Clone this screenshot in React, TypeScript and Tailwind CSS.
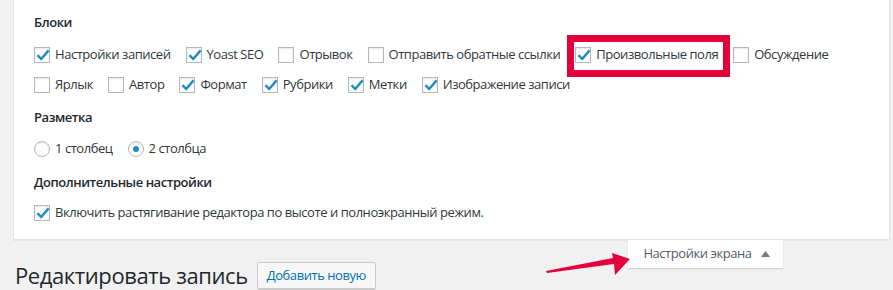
import type { ReactNode } from 'react';

const rowOne = [
  { label: 'Настройки записей', checked: true },
  { label: 'Yoast SEO', checked: true },
  { label: 'Отрывок', checked: false },
  { label: 'Отправить обратные ссылки', checked: false },
  { label: 'Произвольные поля', checked: true },
  { label: 'Обсуждение', checked: false },
];

const rowTwo = [
  { label: 'Ярлык', checked: false },
  { label: 'Автор', checked: false },
  { label: 'Формат', checked: true },
  { label: 'Рубрики', checked: true },
  { label: 'Метки', checked: true },
  { label: 'Изображение записи', checked: true },
];

function Box({ checked }: { checked: boolean }) {
  return (
    <span className="relative flex h-[16px] w-[16px] shrink-0 items-center justify-center border border-[#b4b9be] bg-white shadow-[inset_0_1px_2px_rgba(0,0,0,0.1)]">
      {checked && (
        <svg className="absolute left-[1px] top-[0px] overflow-visible" width="14" height="14" viewBox="0 0 14 14">
          <path d="M1.5 7.2 L5.2 11 L12.6 2.4" fill="none" stroke="#1e8cbe" strokeWidth="2.4" strokeLinejoin="miter" />
        </svg>
      )}
    </span>
  );
}

function Radio({ checked }: { checked: boolean }) {
  return (
    <span className="flex h-[16px] w-[16px] shrink-0 items-center justify-center rounded-full border border-[#b4b9be] bg-white shadow-[inset_0_1px_2px_rgba(0,0,0,0.1)]">
      {checked && <span className="h-[6px] w-[6px] rounded-full bg-[#1e8cbe]" />}
    </span>
  );
}

function Item({ control, label }: { control: ReactNode; label: string }) {
  return (
    <label className="mr-[15px] flex items-center gap-[5px] whitespace-nowrap">
      {control}
      <span>{label}</span>
    </label>
  );
}

function Heading({ children }: { children: ReactNode }) {
  return <h5 className="text-[13px] font-semibold leading-[20px] text-[#23282d]">{children}</h5>;
}

export default function App() {
  return (
    <div className="relative h-[290px] w-[893px] overflow-hidden bg-[#f1f1f1] text-[13px] tracking-[-0.45px] text-[#32373c] [font-family:'Open_Sans',sans-serif]">
      <div className="ml-[13px] mr-[3px] h-[240px] border border-t-0 border-[#e5e5e5] bg-white pl-[20px] pt-[12px] shadow-[0_1px_1px_rgba(0,0,0,0.04)]">
        <Heading>Блоки</Heading>
        <div className="mt-[8px] flex h-[30px] items-center">
          {rowOne.map((i) => (
            <Item key={i.label} control={<Box checked={i.checked} />} label={i.label} />
          ))}
        </div>
        <div className="flex h-[30px] items-center">
          {rowTwo.map((i) => (
            <Item key={i.label} control={<Box checked={i.checked} />} label={i.label} />
          ))}
        </div>

        <div className="mt-[7px]">
          <Heading>Разметка</Heading>
        </div>
        <div className="mt-[7px] flex h-[30px] items-center">
          <Item control={<Radio checked={false} />} label="1 столбец" />
          <Item control={<Radio checked />} label="2 столбца" />
        </div>

        <div className="mt-[8px]">
          <Heading>Дополнительные настройки</Heading>
        </div>
        <div className="mt-[6px] flex h-[30px] items-center">
          <Item
            control={<Box checked />}
            label="Включить растягивание редактора по высоте и полноэкранный режим."
          />
        </div>
      </div>

      <div>
        <div className="float-right mr-[110px] flex h-[28px] w-[155px] items-center justify-center gap-[9px] bg-white pl-[2px] text-[#555d66] shadow-[0_1px_1px_rgba(0,0,0,0.12)]">
          <span>Настройки экрана</span>
          <svg width="9" height="6" viewBox="0 0 9 6">
            <path d="M0 6 L4.5 0 L9 6 Z" fill="#72777c" />
          </svg>
        </div>
        <div className="flex items-center gap-[9px] pl-[15px] pt-[21px]">
          <h1 className="text-[22px] leading-[28px] font-normal tracking-[-0.4px] text-[#23282d]">Редактировать запись</h1>
          <button
            type="button"
            className="h-[27px] rounded-[2px] border border-[#ccc] bg-[#f7f7f7] px-[9px] text-[13px] leading-[25px] text-[#0073aa] shadow-[0_1px_0_#ccc]"
          >
            Добавить новую
          </button>
        </div>
      </div>

      {/* annotation overlays */}
      <div className="pointer-events-none absolute left-[567px] top-[35px] h-[42px] w-[163px] border-[7px] border-[#e4003a]" />
      <svg className="pointer-events-none absolute left-0 top-0" width="893" height="290">
        <polygon points="546,271 613,258 612,253 630,259 615,275 614,264 547,273" fill="#e4003a" />
      </svg>
    </div>
  );
}
